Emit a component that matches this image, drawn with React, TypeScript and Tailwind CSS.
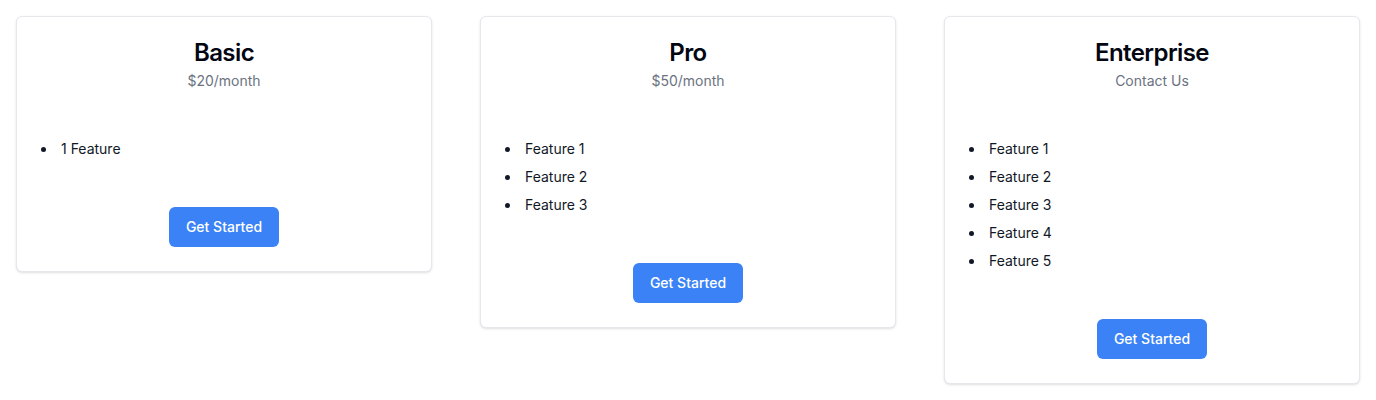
import React from "react";

const plans = [
  { name: "Basic", price: "$20/month", features: ["1 Feature"] },
  { name: "Pro", price: "$50/month", features: ["Feature 1", "Feature 2", "Feature 3"] },
  {
    name: "Enterprise",
    price: "Contact Us",
    features: ["Feature 1", "Feature 2", "Feature 3", "Feature 4", "Feature 5"],
  },
];

export default function App() {
  return (
    <div
      className="grid grid-cols-3 items-start gap-12 p-4 bg-white"
      style={{ fontFamily: "Inter, 'Noto Sans', sans-serif" }}
    >
      {plans.map((p) => (
        <div
          key={p.name}
          className="rounded-md border border-gray-200 bg-white shadow-sm text-gray-950"
        >
          <div className="flex flex-col items-center gap-1.5 p-6">
            <h3 className="text-2xl font-semibold leading-none tracking-tight">{p.name}</h3>
            <p className="text-sm leading-5 text-[#6b7280]">{p.price}</p>
          </div>
          <div className="px-6 pb-6">
            <ul className="my-6 list-inside list-disc space-y-2 text-sm leading-5 text-[#111827]">
              {p.features.map((f) => (
                <li key={f}>{f}</li>
              ))}
            </ul>
          </div>
          <div className="flex justify-center px-6 pb-6">
            <button className="h-10 rounded-md bg-[#3b82f6] px-[17px] text-sm font-medium text-white">
              Get Started
            </button>
          </div>
        </div>
      ))}
    </div>
  );
}
